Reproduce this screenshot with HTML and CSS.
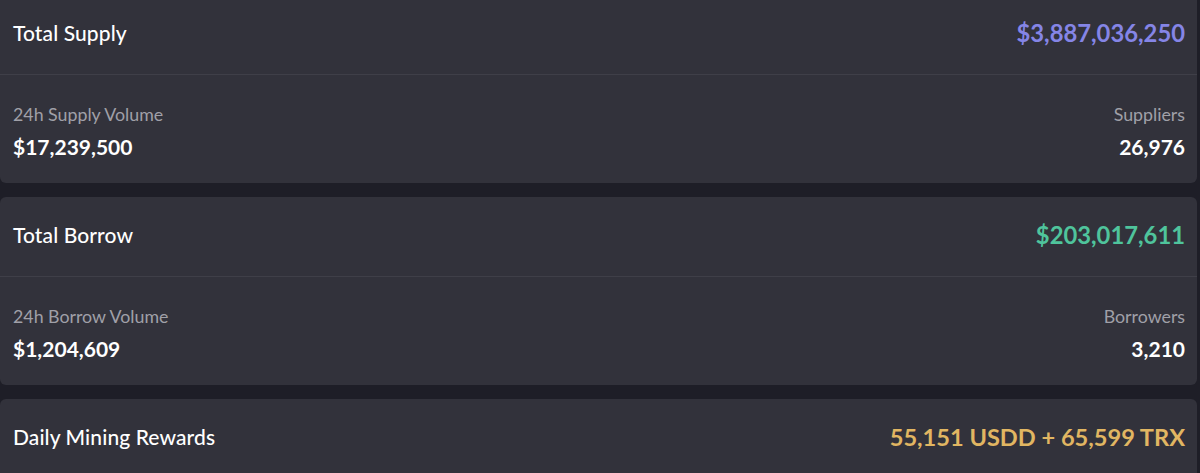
FILE: index.html
```
<!DOCTYPE html>
<html>
<head>
<meta charset="utf-8">
<link rel="stylesheet" href="styles.css">
</head>
<body>
<div class="page">
  <section class="card card-first">
    <div class="head">
      <span class="title">Total Supply</span>
      <span class="total purple">$3,887,036,250</span>
    </div>
    <div class="body">
      <div class="stat">
        <span class="label">24h Supply Volume</span>
        <span class="value">$17,239,500</span>
      </div>
      <div class="stat right">
        <span class="label">Suppliers</span>
        <span class="value">26,976</span>
      </div>
    </div>
  </section>
  <section class="card">
    <div class="head">
      <span class="title">Total Borrow</span>
      <span class="total green">$203,017,611</span>
    </div>
    <div class="body">
      <div class="stat">
        <span class="label">24h Borrow Volume</span>
        <span class="value">$1,204,609</span>
      </div>
      <div class="stat right">
        <span class="label">Borrowers</span>
        <span class="value">3,210</span>
      </div>
    </div>
  </section>
  <section class="card">
    <div class="head">
      <span class="title">Daily Mining Rewards</span>
      <span class="total gold">55,151 USDD + 65,599 TRX</span>
    </div>
  </section>
</div>
</body>
</html>
```
FILE: styles.css
```
html, body {
  margin: 0;
  padding: 0;
  background: #1e1e27;
  overflow: hidden;
}
body {
  font-family: Lato, "Noto Sans", sans-serif;
  color: #ffffff;
}
.page {
  display: flex;
  flex-direction: column;
  gap: 14px;
  width: 1197px;
  margin-top: -5px;
}
.card {
  background: #32323b;
  border-radius: 6px;
}
.head {
  height: 75px;
  box-sizing: content-box;
  display: flex;
  align-items: center;
  justify-content: space-between;
  padding: 0 12px 4px 13px;
  border-bottom: 1px solid #3f3f48;
}
.title {
  font-size: 21px;
  font-weight: 500;
  letter-spacing: 0.1px;
}
.total {
  font-size: 23.8px;
  font-weight: 700;
}
.purple { color: #8585e6; }
.green { color: #4fc49c; }
.gold { color: #e1b662; font-size: 23.6px; }
.body {
  height: 108px;
  display: flex;
  justify-content: space-between;
  align-items: flex-start;
  padding: 0 12px 0 13px;
}
.stat {
  display: flex;
  flex-direction: column;
  padding-top: 29px;
  gap: 11px;
}
.stat.right {
  align-items: flex-end;
}
.label {
  font-size: 17.8px;
  font-weight: 400;
  color: #a0a0a8;
  line-height: 20px;
}
.value {
  font-size: 21px;
  font-weight: 700;
  line-height: 24px;
}
```
